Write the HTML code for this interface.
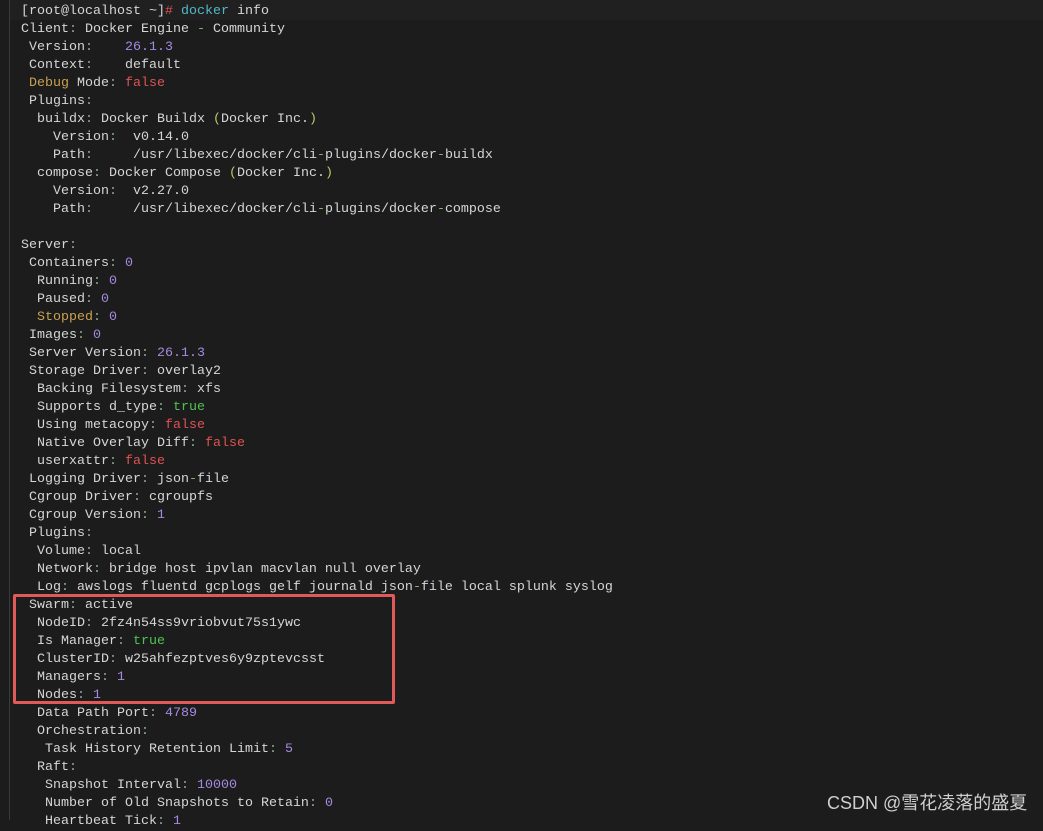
<!DOCTYPE html>
<html><head><meta charset="utf-8"><style>
html,body{margin:0;padding:0;width:1043px;height:820px;overflow:hidden;background:#1c1c1c}
.bar{position:absolute;left:9px;top:0;width:1px;height:820px;background:#3a3a3a}
.l1{position:absolute;left:10px;top:0;width:1033px;height:20px;background:#202020}
pre{position:absolute;left:21px;top:3px;margin:0;font-family:"Liberation Mono",monospace;font-size:13.33px;line-height:18px;color:#d6d6d6;white-space:pre}
.c{color:#8fae9c}.n{color:#a58ae0}.r{color:#e05252}.g{color:#4fc24f}.y{color:#c9a050}.t{color:#4fb8c8}.p{color:#b8c96a}.h{color:#7fb870}
.box{position:absolute;left:13px;top:594px;width:376px;height:104px;border:3px solid #e05a5a;border-radius:2px}
.wm{position:absolute;left:827px;top:789px;font-family:"Liberation Sans","Noto Sans CJK SC",sans-serif;font-size:18px;color:#cfcfcf}
</style></head><body>
<div class="bar"></div><div class="l1"></div>
<pre>[root@localhost ~]<span class="r">#</span> <span class="t">docker</span> info
Client<span class="c">:</span> Docker Engine <span class="h">-</span> Community
 Version<span class="c">:</span>    <span class="n">26.1.3</span>
 Context<span class="c">:</span>    default
 <span class="y">Debug</span> Mode<span class="c">:</span> <span class="r">false</span>
 Plugins<span class="c">:</span>
  buildx<span class="c">:</span> Docker Buildx <span class="p">(</span>Docker Inc.<span class="p">)</span>
    Version<span class="c">:</span>  v0.14.0
    Path<span class="c">:</span>     /usr/libexec/docker/cli<span class="h">-</span>plugins/docker<span class="h">-</span>buildx
  compose<span class="c">:</span> Docker Compose <span class="p">(</span>Docker Inc.<span class="p">)</span>
    Version<span class="c">:</span>  v2.27.0
    Path<span class="c">:</span>     /usr/libexec/docker/cli<span class="h">-</span>plugins/docker<span class="h">-</span>compose

Server<span class="c">:</span>
 Containers<span class="c">:</span> <span class="n">0</span>
  Running<span class="c">:</span> <span class="n">0</span>
  Paused<span class="c">:</span> <span class="n">0</span>
  <span class="y">Stopped</span><span class="c">:</span> <span class="n">0</span>
 Images<span class="c">:</span> <span class="n">0</span>
 Server Version<span class="c">:</span> <span class="n">26.1.3</span>
 Storage Driver<span class="c">:</span> overlay2
  Backing Filesystem<span class="c">:</span> xfs
  Supports d_type<span class="c">:</span> <span class="g">true</span>
  Using metacopy<span class="c">:</span> <span class="r">false</span>
  Native Overlay Diff<span class="c">:</span> <span class="r">false</span>
  userxattr<span class="c">:</span> <span class="r">false</span>
 Logging Driver<span class="c">:</span> json<span class="h">-</span>file
 Cgroup Driver<span class="c">:</span> cgroupfs
 Cgroup Version<span class="c">:</span> <span class="n">1</span>
 Plugins<span class="c">:</span>
  Volume<span class="c">:</span> local
  Network<span class="c">:</span> bridge host ipvlan macvlan null overlay
  Log<span class="c">:</span> awslogs fluentd gcplogs gelf journald json<span class="h">-</span>file local splunk syslog
 Swarm<span class="c">:</span> active
  NodeID<span class="c">:</span> 2fz4n54ss9vriobvut75s1ywc
  Is Manager<span class="c">:</span> <span class="g">true</span>
  ClusterID<span class="c">:</span> w25ahfezptves6y9zptevcsst
  Managers<span class="c">:</span> <span class="n">1</span>
  Nodes<span class="c">:</span> <span class="n">1</span>
  Data Path Port<span class="c">:</span> <span class="n">4789</span>
  Orchestration<span class="c">:</span>
   Task History Retention Limit<span class="c">:</span> <span class="n">5</span>
  Raft<span class="c">:</span>
   Snapshot Interval<span class="c">:</span> <span class="n">10000</span>
   Number of Old Snapshots to Retain<span class="c">:</span> <span class="n">0</span>
   Heartbeat Tick<span class="c">:</span> <span class="n">1</span></pre>
<div class="box"></div>
<div class="wm">CSDN @雪花凌落的盛夏</div>
</body></html>
